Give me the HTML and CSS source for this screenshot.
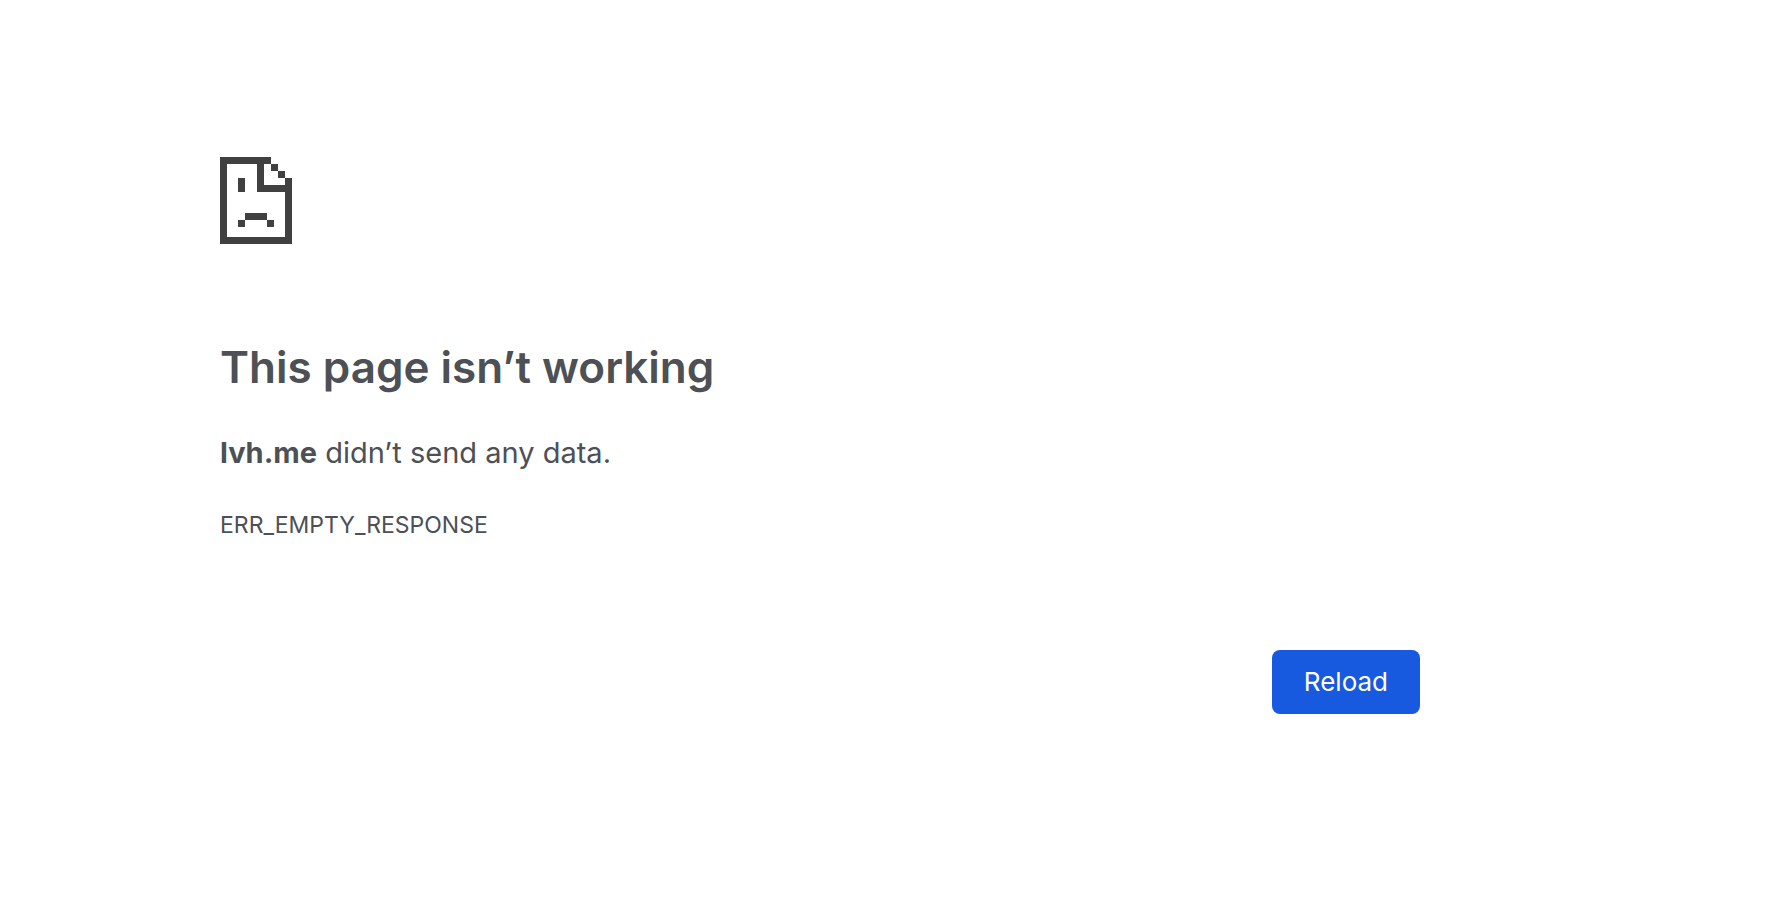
FILE: index.html
```html
<!DOCTYPE html>
<html lang="en">
<head>
<meta charset="utf-8">
<meta name="viewport" content="width=device-width, initial-scale=1">
<title>lvh.me</title>
<link rel="stylesheet" href="styles.css">
</head>
<body>
<main class="error">
  <svg class="error-icon" viewBox="0 0 72 87" shape-rendering="crispEdges" aria-hidden="true">
    <path d="M0 0H51V7H44V28H65V21H72V87H0ZM7 7V80H65V35H37V7Z" fill-rule="evenodd"/>
    <path d="M51 7H58V14H51ZM58 14H65V21H58ZM18 21H25V35H18ZM25 56H47V63H25ZM18 63H25V70H18ZM47 63H54V70H47Z"/>
  </svg>
  <h1 class="error-title">This page isn’t working</h1>
  <p class="error-summary"><strong>lvh.me</strong> didn’t send any data.</p>
  <p class="error-code">ERR_EMPTY_RESPONSE</p>
  <div class="error-actions">
    <button class="reload" type="button">Reload</button>
  </div>
</main>
</body>
</html>
```
FILE: styles.css
```css
body {
  margin: 0;
  background: #fff;
  color: #4d5054;
  font-family: Inter, "Liberation Sans", sans-serif;
}

.error {
  box-sizing: border-box;
  max-width: 1420px;
  padding: 157px 0 40px 220px;
}

.error-icon {
  display: block;
  width: 72px;
  height: 87px;
  fill: #404040;
}

.error-title {
  margin: 93px 0 32px;
  font-size: 44px;
  font-weight: 600;
  line-height: 60px;
}

.error-summary {
  margin: 0 0 30px;
  font-size: 29px;
  line-height: 48px;
}

.error-summary strong {
  font-weight: 700;
}

.error-code {
  margin: 0;
  font-size: 23px;
  line-height: 36px;
}

.error-actions {
  display: flex;
  justify-content: flex-end;
  margin-top: 107px;
}

.reload {
  padding: 16px 32px;
  border: 0;
  border-radius: 8px;
  background: #175adf;
  color: #fff;
  font-family: inherit;
  font-size: 26px;
  line-height: 32px;
}
```
